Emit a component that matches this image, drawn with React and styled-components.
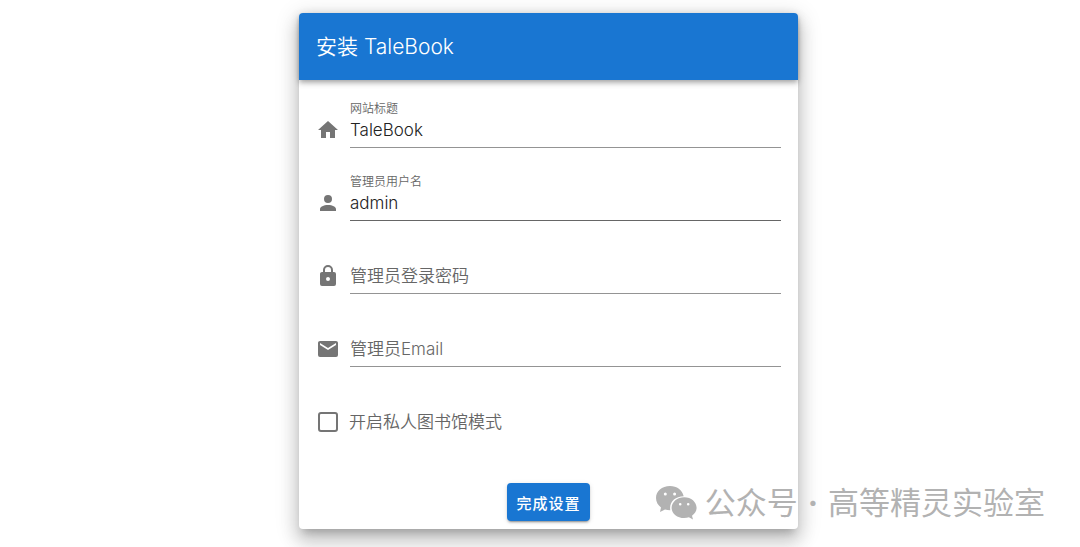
import { useState } from "react";
import styled, { createGlobalStyle } from "styled-components";

const icons = {
    home: "M10,20V14H14V20H19V12H22L12,3L2,12H5V20H10Z",
    account:
        "M12,4A4,4 0 0,1 16,8A4,4 0 0,1 12,12A4,4 0 0,1 8,8A4,4 0 0,1 12,4M12,14C16.42,14 20,15.79 20,18V20H4V18C4,15.79 7.58,14 12,14Z",
    lock: "M12,17A2,2 0 0,0 14,15C14,13.89 13.1,13 12,13A2,2 0 0,0 10,15A2,2 0 0,0 12,17M18,8A2,2 0 0,1 20,10V20A2,2 0 0,1 18,22H6A2,2 0 0,1 4,20V10C4,8.89 4.9,8 6,8H7V6A5,5 0 0,1 12,1A5,5 0 0,1 17,6V8H18M12,3A3,3 0 0,0 9,6V8H15V6A3,3 0 0,0 12,3Z",
    email: "M20,8L12,13L4,8V6L12,11L20,6M20,4H4C2.89,4 2,4.89 2,6V18A2,2 0 0,0 4,20H20A2,2 0 0,0 22,18V6C22,4.89 21.1,4 20,4Z",
};

const fields = [
    { name: "title", label: "网站标题", icon: "home", type: "text" },
    {
        name: "username",
        label: "管理员用户名",
        icon: "account",
        type: "text",
        strong: true,
    },
    {
        name: "password",
        label: "管理员登录密码",
        icon: "lock",
        type: "password",
    },
    { name: "email", label: "管理员Email", icon: "email", type: "email" },
];

const TextField = ({ field, value, onChange }) => {
    const [focused, setFocused] = useState(false);

    return (
        <Field>
            <FieldIcon viewBox="0 0 24 24" aria-hidden="true">
                <path d={icons[field.icon]} />
            </FieldIcon>
            <Label htmlFor={field.name} $floating={focused || value !== ""}>
                {field.label}
            </Label>
            <Input
                id={field.name}
                name={field.name}
                type={field.type}
                value={value}
                $strong={field.strong}
                onFocus={() => setFocused(true)}
                onBlur={() => setFocused(false)}
                onChange={(ev) => onChange(field.name, ev.target.value)}
            />
        </Field>
    );
};

const WechatIcon = () => (
    <WechatSvg viewBox="0 0 42 36" aria-hidden="true">
        <path
            fillRule="evenodd"
            d="M15 1C6.800 1 1 6.300 1 13C1 17 3 20.200 6 22.500L5 27L10 24.500C11.700 25 13.400 25.200 15.300 25.200C14 17 20 11.400 28.700 11.200C27.300 5 21.800 1 15 1ZM10.300 7.600A1.500 1.500 0 1 1 10.300 10.600A1.500 1.500 0 0 1 10.300 7.600ZM19.600 7.600A1.500 1.500 0 1 1 19.600 10.600A1.500 1.500 0 0 1 19.600 7.600Z"
        />
        <path
            fillRule="evenodd"
            d="M29.200 12.300C22.300 12.300 16.600 17 16.600 22.800C16.600 28.600 22.300 33.100 29.200 33.100C30.900 33.100 32.500 32.800 33.900 32.300L38 34.600L37 30.700C39.900 28.700 41.600 25.900 41.600 22.800C41.600 17 36.200 12.300 29.200 12.300ZM25.200 18A1.300 1.300 0 1 1 25.200 20.600A1.300 1.300 0 0 1 25.200 18ZM33.200 18A1.300 1.300 0 1 1 33.200 20.600A1.300 1.300 0 0 1 33.200 18Z"
        />
    </WechatSvg>
);

const App = () => {
    const [form, setForm] = useState({
        title: "TaleBook",
        username: "admin",
        password: "",
        email: "",
    });
    const [invite, setInvite] = useState(false);

    const update = (name, value) => setForm({ ...form, [name]: value });

    return (
        <Page>
            <GlobalStyle />
            <Card onSubmit={(ev) => ev.preventDefault()}>
                <Toolbar>
                    <Title>安装 TaleBook</Title>
                </Toolbar>
                <Fields>
                    {fields.map((field) => (
                        <TextField
                            key={field.name}
                            field={field}
                            value={form[field.name]}
                            onChange={update}
                        />
                    ))}
                </Fields>
                <CheckLabel>
                    <Checkbox
                        type="checkbox"
                        checked={invite}
                        onChange={(ev) => setInvite(ev.target.checked)}
                    />
                    开启私人图书馆模式
                </CheckLabel>
                <Actions>
                    <Button type="submit">完成设置</Button>
                </Actions>
            </Card>
            <Watermark>
                <WechatIcon />
                <WatermarkText>
                    <span>公众号</span>
                    <Dot>·</Dot>
                    <span>高等精灵实验室</span>
                </WatermarkText>
            </Watermark>
        </Page>
    );
};

const GlobalStyle = createGlobalStyle`
    * {
        box-sizing: border-box;
    }

    body {
        margin: 0;
        background: #fff;
        color: #222;
        font-family: Inter, "Noto Sans CJK SC", sans-serif;
        font-size: 17px;
    }
`;

const Page = styled.main`
    position: relative;
    min-height: 100vh;
    padding: 13px 0 18px 17px;
    overflow: hidden;
`;

const Card = styled.form`
    max-width: 499px;
    margin: 0 auto;
    border-radius: 4px;
    background: #fff;
    box-shadow: 0 7px 8px -4px rgba(0, 0, 0, 0.2),
        0 12px 17px 2px rgba(0, 0, 0, 0.14), 0 5px 22px 4px rgba(0, 0, 0, 0.12);
`;

const Toolbar = styled.header`
    display: flex;
    align-items: center;
    height: 67px;
    padding: 0 17px;
    border-radius: 4px 4px 0 0;
    background: #1976d2;
    color: #fff;
    box-shadow: 0 2px 4px -1px rgba(0, 0, 0, 0.2),
        0 4px 5px 0 rgba(0, 0, 0, 0.14), 0 1px 10px 0 rgba(0, 0, 0, 0.12);
`;

const Title = styled.h1`
    margin: 0;
    font-size: 21px;
    font-weight: 350;
    line-height: 30px;
`;

const Fields = styled.div`
    display: grid;
    gap: 25px;
    padding: 20px 17px 0;
`;

const Field = styled.div`
    display: grid;
    grid-template-columns: 24px 1fr;
    grid-template-rows: 16px 32px;
    column-gap: 10px;
`;

const FieldIcon = styled.svg`
    grid-area: 2 / 1;
    width: 24px;
    height: 28px;
    fill: #757575;
`;

const Label = styled.label`
    grid-area: ${(props) => (props.$floating ? "1 / 2" : "2 / 2")};
    color: #666;
    font-size: ${(props) => (props.$floating ? "12px" : "17px")};
    font-weight: 350;
    line-height: ${(props) => (props.$floating ? "18px" : "28px")};
    pointer-events: none;
`;

const Input = styled.input`
    grid-area: 2 / 2;
    min-width: 0;
    padding: 0 0 3px;
    border: 0;
    border-bottom: 1px solid ${(props) => (props.$strong ? "#666" : "#949494")};
    outline: 0;
    background: transparent;
    color: #222;
    font: inherit;
    font-weight: 350;

    &:focus {
        border-color: #1976d2;
    }
`;

const CheckLabel = styled.label`
    display: flex;
    align-items: center;
    gap: 11px;
    margin: 43px 17px 0;
    color: #666;
    font-weight: 350;
    line-height: 24px;
`;

const Checkbox = styled.input`
    appearance: none;
    width: 20px;
    height: 20px;
    margin: 0 0 0 2px;
    border: 2px solid #757575;
    border-radius: 3px;

    &:checked {
        border-color: #1976d2;
        background: #1976d2;
    }
`;

const Actions = styled.div`
    display: flex;
    justify-content: center;
    padding: 49px 8px 8px;
`;

const Button = styled.button`
    height: 38px;
    padding: 0 9px;
    border: 0;
    border-radius: 4px;
    background: #1976d2;
    color: #fff;
    font: inherit;
    font-size: 15px;
    font-weight: 500;
    letter-spacing: 1px;
    cursor: pointer;
    box-shadow: 0 3px 1px -2px rgba(0, 0, 0, 0.2),
        0 2px 2px 0 rgba(0, 0, 0, 0.14), 0 1px 5px 0 rgba(0, 0, 0, 0.12);
`;

const Watermark = styled.div`
    position: absolute;
    right: 35px;
    bottom: 22px;
    display: flex;
    align-items: center;
    gap: 8px;
    color: #b2b2b2;
    font-size: 31px;
    line-height: 44px;
    white-space: nowrap;
    pointer-events: none;
`;

const WatermarkText = styled.p`
    display: flex;
    gap: 10px;
    margin: 0;
`;

const Dot = styled.span`
    font-weight: 700;
`;

const WechatSvg = styled.svg`
    width: 42px;
    height: 36px;
    fill: currentColor;
`;

export default App;
